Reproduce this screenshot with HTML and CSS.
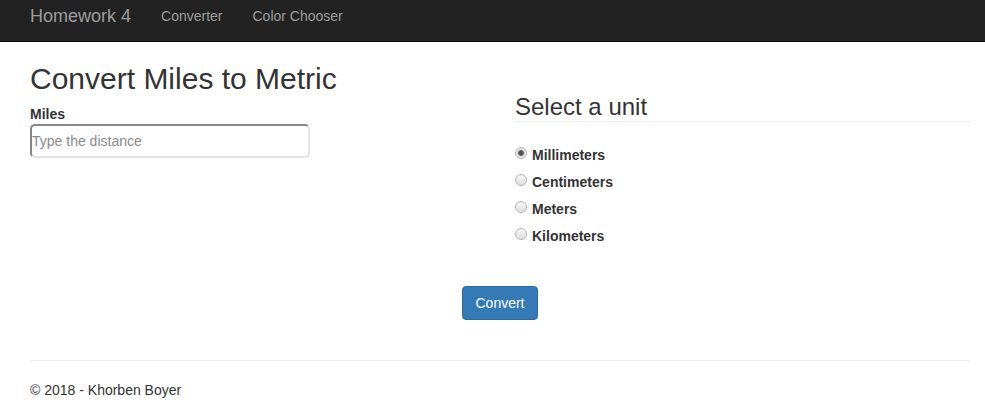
FILE: index.html
```html
<!DOCTYPE html>
<html lang="en">
<head>
<meta charset="utf-8">
<title>Convert Miles to Metric</title>
<link rel="stylesheet" href="styles.css">
</head>
<body>
<nav class="navbar">
  <a class="brand" href="#">Homework 4</a>
  <a class="nav-link" href="#">Converter</a>
  <a class="nav-link" href="#">Color Chooser</a>
</nav>
<main class="container">
  <div class="row">
    <div class="col">
      <h2 class="title">Convert Miles to Metric</h2>
      <label class="field-label" for="miles">Miles</label>
      <input class="text-input" id="miles" type="text" placeholder="Type the distance">
    </div>
    <div class="col">
      <h3 class="section-title">Select a unit</h3>
      <div class="radios">
        <label class="radio-row"><input class="radio" type="radio" name="unit" checked><span>Millimeters</span></label>
        <label class="radio-row"><input class="radio" type="radio" name="unit"><span>Centimeters</span></label>
        <label class="radio-row"><input class="radio" type="radio" name="unit"><span>Meters</span></label>
        <label class="radio-row"><input class="radio" type="radio" name="unit"><span>Kilometers</span></label>
      </div>
    </div>
  </div>
  <div class="actions">
    <button class="btn-primary" type="button">Convert</button>
  </div>
  <hr class="divider">
  <footer class="footer">© 2018 - Khorben Boyer</footer>
</main>
</body>
</html>
```

FILE: styles.css
```css
html, body {
  margin: 0;
  padding: 0;
}
body {
  font-family: "Liberation Sans", Arial, sans-serif;
  font-size: 14px;
  line-height: 20px;
  color: #333;
  background: #fff;
}
.navbar {
  display: flex;
  align-items: flex-start;
  box-sizing: border-box;
  height: 42px;
  padding: 6px 0 0 15px;
  background: #222;
  border-bottom: 1px solid #080808;
}
.brand {
  font-size: 18px;
  line-height: 20px;
  color: #9d9d9d;
  text-decoration: none;
  padding: 0 15px;
}
.nav-link {
  font-size: 14px;
  line-height: 20px;
  color: #9d9d9d;
  text-decoration: none;
  padding: 0 15px;
}
.container {
  padding: 0 15px 0 30px;
}
.row {
  display: grid;
  grid-template-columns: 1fr 1fr;
  column-gap: 30px;
}
.title {
  margin: 20px 0 10px;
  font-size: 30px;
  line-height: 33px;
  font-weight: 400;
  color: #333;
}
.field-label {
  display: block;
  font-weight: 700;
  line-height: 19px;
}
.text-input {
  display: block;
  box-sizing: border-box;
  width: 280px;
  height: 34px;
  margin: 0;
  padding: 0;
  font-family: "Liberation Sans", Arial, sans-serif;
  font-size: 14px;
  color: #555;
  background: #fff;
  border: 2px solid;
  border-color: #878787 #e3e3e3 #e3e3e3 #878787;
  border-radius: 5px;
  outline: none;
}
.text-input::placeholder {
  color: #8a8a8a;
}
.section-title {
  margin: 52px 0 0;
  padding-bottom: 1px;
  font-size: 24px;
  line-height: 26px;
  font-weight: 400;
  color: #333;
  border-bottom: 1px solid #eee;
}
.radios {
  margin-top: 19px;
}
.radio-row {
  display: flex;
  align-items: center;
  height: 27px;
  font-weight: 700;
}
.radio {
  appearance: none;
  -webkit-appearance: none;
  box-sizing: border-box;
  flex: none;
  width: 12px;
  height: 12px;
  margin: 0 5px 3px 0;
  border: 1px solid #b4b4b4;
  border-radius: 50%;
  background: linear-gradient(#f6f6f6, #e0e0e0);
}
.radio:checked {
  background: radial-gradient(circle, #555 0 2.4px, #d6d6d6 3.2px, #eeeeee 5px);
}
.actions {
  margin-top: 37px;
  text-align: center;
}
.btn-primary {
  display: inline-block;
  padding: 6px 12px;
  font-family: "Liberation Sans", Arial, sans-serif;
  font-size: 14px;
  line-height: 20px;
  color: #fff;
  background: #337ab7;
  border: 1px solid #2e6da4;
  border-radius: 4px;
  cursor: pointer;
}
.divider {
  margin: 40px 0 19px;
  border: 0;
  border-top: 1px solid #eee;
}
.footer {
  line-height: 20px;
  color: #333;
}
```
